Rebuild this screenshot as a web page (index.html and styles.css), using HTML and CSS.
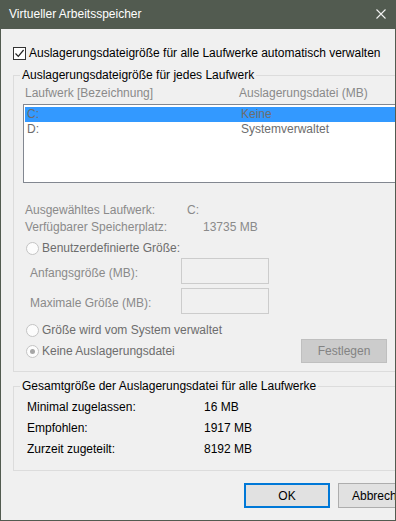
FILE: index.html
```html
<!DOCTYPE html>
<html lang="de">

<head>
    <meta charset="UTF-8" />
    <title>Virtueller Arbeitsspeicher</title>
    <link rel="stylesheet" href="styles.css">
</head>

<body>
    <div class="window">
        <div class="titlebar">
            <span class="title">Virtueller Arbeitsspeicher</span>
            <svg class="close" width="10" height="10" viewBox="0 0 10 10">
                <path d="M0.5 0.5 L9.5 9.5 M9.5 0.5 L0.5 9.5" stroke="#f2f2f2" stroke-width="1.1" fill="none" />
            </svg>
        </div>

        <div class="content">
            <label class="check-row">
                <span class="checkbox">
                    <svg width="11" height="11" viewBox="0 0 11 11">
                        <path d="M1.5 5.5 L4.3 8.3 L9.6 2" stroke="#222" stroke-width="1.2" fill="none" />
                    </svg>
                </span>
                <span>Auslagerungsdateigröße für alle Laufwerke automatisch verwalten</span>
            </label>

            <fieldset class="group group-drives">
                <legend class="legend">Auslagerungsdateigröße für jedes Laufwerk</legend>

                <div class="list-head">
                    <span class="col-drive">Laufwerk [Bezeichnung]</span>
                    <span>Auslagerungsdatei (MB)</span>
                </div>

                <div class="listbox">
                    <div class="list-row selected">
                        <span class="col-drive">C:</span>
                        <span>Keine</span>
                    </div>
                    <div class="list-row">
                        <span class="col-drive">D:</span>
                        <span>Systemverwaltet</span>
                    </div>
                </div>

                <div class="info">
                    <div class="info-row">
                        <span class="info-label">Ausgewähltes Laufwerk:</span>
                        <span>C:</span>
                    </div>
                    <div class="info-row">
                        <span class="info-label">Verfügbarer Speicherplatz:</span>
                        <span class="info-indent">13735 MB</span>
                    </div>
                </div>

                <div class="radio-row radio-custom">
                    <span class="radio"></span>
                    <span>Benutzerdefinierte Größe:</span>
                </div>

                <div class="field-row field-first">
                    <span class="field-label">Anfangsgröße (MB):</span>
                    <span class="textbox"></span>
                </div>
                <div class="field-row">
                    <span class="field-label">Maximale Größe (MB):</span>
                    <span class="textbox"></span>
                </div>

                <div class="radio-row radio-system">
                    <span class="radio"></span>
                    <span>Größe wird vom System verwaltet</span>
                </div>

                <div class="set-row">
                    <div class="radio-row">
                        <span class="radio checked"></span>
                        <span>Keine Auslagerungsdatei</span>
                    </div>
                    <button class="btn btn-disabled">Festlegen</button>
                </div>
            </fieldset>

            <fieldset class="group group-total">
                <legend class="legend">Gesamtgröße der Auslagerungsdatei für alle Laufwerke</legend>
                <div class="total-row">
                    <span class="total-label">Minimal zugelassen:</span>
                    <span>16 MB</span>
                </div>
                <div class="total-row">
                    <span class="total-label">Empfohlen:</span>
                    <span>1917 MB</span>
                </div>
                <div class="total-row">
                    <span class="total-label">Zurzeit zugeteilt:</span>
                    <span>8192 MB</span>
                </div>
            </fieldset>

            <div class="button-row">
                <button class="btn btn-default">OK</button>
                <button class="btn">Abbrechen</button>
            </div>
        </div>
    </div>
</body>
</html>
```

FILE: styles.css
```css
:root {
    --frame: #525b50;
    --face: #f0f0f0;
    --line: #dcdcdc;
    --gray-text: #6d6d6d;
    --light-text: #8a8a8a;
    --select: #3399ff;
    --accent: #0078d7;
}

* {
    margin: 0;
    padding: 0;
    box-sizing: border-box;
}

body {
    font-family: 'Liberation Sans', Arial, sans-serif;
    font-size: 12px;
    color: #000;
    background-color: var(--face);
}

.window {
    width: 396px;
    height: 521px;
    border: 1px solid var(--frame);
    border-top: none;
    background-color: var(--face);
    overflow: hidden;
}

.titlebar {
    height: 29px;
    background-color: var(--frame);
    color: #fff;
    display: flex;
    align-items: center;
    justify-content: space-between;
    padding: 0 9px 1px 8px;
}

.title {
    font-size: 12px;
}

.close {
    display: block;
}

.content {
    width: 440px;
    padding-left: 12px;
}

/* checkbox line */

.check-row {
    margin-top: 18px;
    height: 13px;
    display: flex;
    align-items: center;
    gap: 3px;
    line-height: 13px;
}

.checkbox {
    width: 13px;
    height: 13px;
    border: 1px solid #333;
    background-color: #fff;
    display: flex;
    align-items: center;
    justify-content: center;
}

.checkbox svg {
    display: block;
}

/* group boxes */

.group {
    border: 1px solid var(--line);
    padding: 0;
    min-width: 0;
}

.legend {
    margin-left: 6px;
    padding: 0 2px;
    line-height: 15px;
    height: 15px;
}

.group-drives {
    margin-top: 8px;
    padding-bottom: 8px;
}

.group-total {
    margin-top: 7px;
    padding-bottom: 10px;
}

.list-head {
    margin-top: 3px;
    height: 15px;
    line-height: 15px;
    padding-left: 11px;
    display: flex;
    color: var(--light-text);
}

.col-drive {
    width: 214px;
    flex-shrink: 0;
}

.listbox {
    margin-top: 3px;
    margin-left: 9px;
    height: 79px;
    border: 1px solid #828790;
    background-color: #fff;
    padding: 2px 0 0 1px;
    color: var(--gray-text);
}

.list-row {
    height: 15px;
    line-height: 14px;
    padding-left: 2px;
    display: flex;
}

.list-row.selected {
    background-color: var(--select);
}

.info {
    margin-top: 19px;
    padding-left: 11px;
    color: var(--light-text);
}

.info-row {
    height: 17px;
    line-height: 17px;
    display: flex;
}

.info-label {
    width: 162px;
    flex-shrink: 0;
}

.info-indent {
    padding-left: 16px;
}

.radio-row {
    height: 15px;
    line-height: 15px;
    display: flex;
    align-items: center;
    gap: 3px;
    padding-left: 12px;
    color: var(--gray-text);
}

.radio {
    width: 13px;
    height: 13px;
    border-radius: 50%;
    border: 1px solid #c4c4c4;
    background-color: #fcfcfc;
    display: flex;
    align-items: center;
    justify-content: center;
}

.radio.checked::after {
    content: '';
    width: 5px;
    height: 5px;
    border-radius: 50%;
    background-color: #a6a6a6;
}

.radio-custom {
    margin-top: 5px;
}

.field-row {
    margin-top: 4px;
    height: 26px;
    display: flex;
    align-items: center;
    padding-left: 16px;
    padding-top: 3px;
    color: var(--light-text);
}

.field-first {
    margin-top: 2px;
}

.field-label {
    width: 151px;
    flex-shrink: 0;
}

.textbox {
    width: 88px;
    height: 26px;
    margin-top: -3px;
    border: 1px solid #cccccc;
    background-color: var(--face);
}

.radio-system {
    margin-top: 9px;
}

.set-row {
    margin-top: 1px;
    width: 373px;
    height: 24px;
    display: flex;
    align-items: center;
    justify-content: space-between;
}

/* buttons */

.btn {
    font-family: inherit;
    font-size: 12px;
    width: 86px;
    height: 25px;
    background-color: #e1e1e1;
    border: 1px solid #adadad;
    color: #000;
}

.btn-disabled {
    height: 24px;
    background-color: #cccccc;
    border-color: #bfbfbf;
    color: #838383;
}

.btn-default {
    border: 2px solid var(--accent);
}

.button-row {
    margin-top: 12px;
    padding-left: 231px;
    display: flex;
    gap: 8px;
}

/* totals */

.total-row {
    height: 21px;
    line-height: 21px;
    display: flex;
    padding-left: 13px;
}

.total-row:first-of-type {
    margin-top: 3px;
}

.total-label {
    width: 177px;
    flex-shrink: 0;
}
```
